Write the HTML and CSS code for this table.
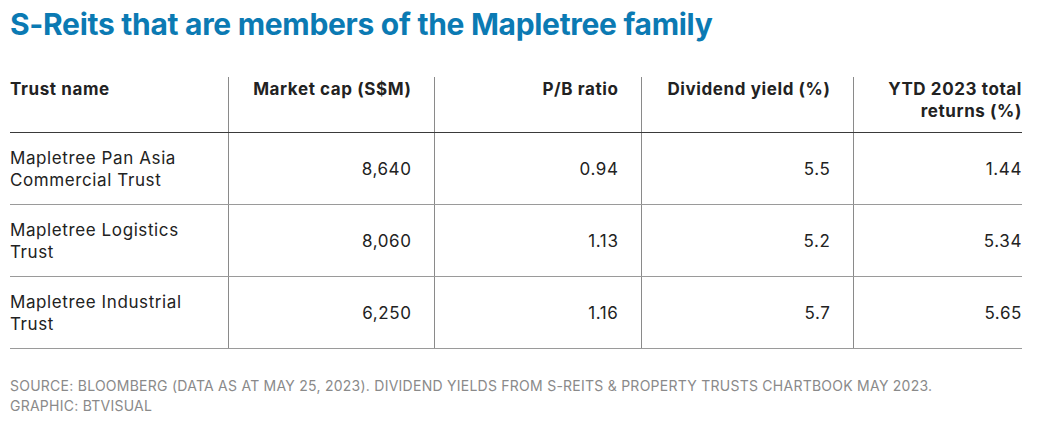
FILE: index.html
```html
<!DOCTYPE html>
<html>
<head>
<meta charset="utf-8">
<link rel="stylesheet" href="styles.css">
</head>
<body>
<div class="page">
  <h1 class="title">S-Reits that are members of the Mapletree family</h1>
  <table class="reits">
    <colgroup>
      <col class="c1"><col class="c2"><col class="c3"><col class="c4"><col class="c5">
    </colgroup>
    <thead>
      <tr>
        <th class="name">Trust name</th>
        <th>Market cap (S$M)</th>
        <th>P/B ratio</th>
        <th>Dividend yield (%)</th>
        <th class="last">YTD 2023 total<br>returns (%)</th>
      </tr>
    </thead>
    <tbody>
      <tr>
        <td class="name">Mapletree Pan Asia<br>Commercial Trust</td>
        <td>8,640</td><td>0.94</td><td>5.5</td><td class="last">1.44</td>
      </tr>
      <tr>
        <td class="name">Mapletree Logistics<br>Trust</td>
        <td>8,060</td><td>1.13</td><td>5.2</td><td class="last">5.34</td>
      </tr>
      <tr>
        <td class="name">Mapletree Industrial<br>Trust</td>
        <td>6,250</td><td>1.16</td><td>5.7</td><td class="last">5.65</td>
      </tr>
    </tbody>
  </table>
  <p class="source">SOURCE: BLOOMBERG (DATA AS AT MAY 25, 2023). DIVIDEND YIELDS FROM S-REITS &amp; PROPERTY TRUSTS CHARTBOOK MAY 2023.<br>GRAPHIC: BTVISUAL</p>
</div>
</body>
</html>
```

FILE: styles.css
```css
html, body {
  margin: 0;
  padding: 0;
  background: #ffffff;
}
.page {
  padding: 5px 16px 0 10px;
  font-family: Inter, "Noto Sans", sans-serif;
  color: #222222;
}
.title {
  margin: 0;
  font-size: 30px;
  line-height: 38px;
  font-weight: 700;
  color: #0b7ab3;
  letter-spacing: -0.3px;
}
.reits {
  margin-top: 34px;
  width: 1012px;
  border-collapse: collapse;
  table-layout: fixed;
  font-size: 17px;
  line-height: 22px;
  letter-spacing: 0.6px;
}
.c1 { width: 218px; }
.c2 { width: 206px; }
.c3 { width: 207px; }
.c4 { width: 212px; }
.c5 { width: 169px; }
.reits th {
  font-weight: 700;
  text-align: right;
  vertical-align: top;
  padding: 0 22px 0 0;
  height: 55px;
  box-sizing: border-box;
  padding-top: 1px;
  border-bottom: 1px solid #3a3a3a;
  border-left: 1px solid #8a8a8a;
}
.reits td {
  text-align: right;
  vertical-align: middle;
  padding: 1px 22px 0 0;
  height: 70px;
  border-bottom: 1px solid #9a9a9a;
  border-left: 1px solid #8a8a8a;
}
.reits .name {
  text-align: left;
  border-left: none;
  padding-left: 0;
}
.reits td.name { font-weight: 400; }
.reits .last { padding-right: 0; }
.source {
  margin: 27px 0 0 0;
  font-size: 14px;
  line-height: 20px;
  color: #8a8a8a;
  letter-spacing: 0.25px;
}
```
